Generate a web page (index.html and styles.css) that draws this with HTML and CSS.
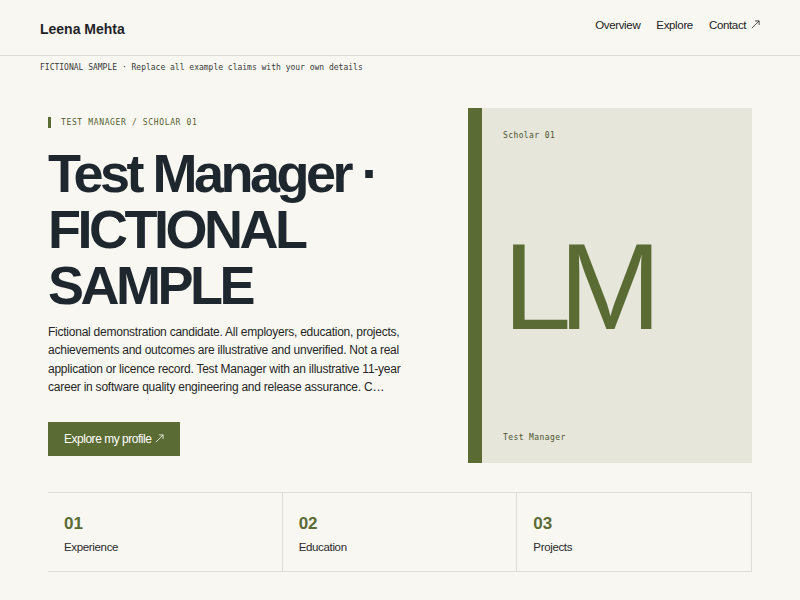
FILE: index.html
```html
<!DOCTYPE html>
<html lang="en">
<head>
<meta charset="utf-8">
<title>Leena Mehta</title>
<link rel="stylesheet" href="styles.css">
</head>
<body>
<header class="site-header">
  <div class="brand">Leena Mehta</div>
  <nav class="nav">
    <a href="#overview">Overview</a>
    <a href="#explore">Explore</a>
    <a href="#contact">Contact <svg class="arrow" viewBox="0 0 10 10" aria-hidden="true"><path d="M1 9L9 1M4.5 1H9V5.5"/></svg></a>
  </nav>
</header>
<div class="notice">FICTIONAL SAMPLE · Replace all example claims with your own details</div>
<main class="page">
  <section class="hero">
    <div class="hero-text">
      <div class="eyebrow">TEST MANAGER / SCHOLAR 01</div>
      <h1 class="title">Test Manager · FICTIONAL SAMPLE</h1>
      <p class="lead">Fictional demonstration candidate. All employers, education, projects, achievements and outcomes are illustrative and unverified. Not a real application or licence record. Test Manager with an illustrative 11-year career in software quality engineering and release assurance. C…</p>
      <a class="btn" href="#explore">Explore my profile <svg class="arrow" viewBox="0 0 10 10" aria-hidden="true"><path d="M1 9L9 1M4.5 1H9V5.5"/></svg></a>
    </div>
    <aside class="card">
      <div class="card-label">Scholar 01</div>
      <div class="monogram">LM</div>
      <div class="card-label">Test Manager</div>
    </aside>
  </section>
  <section class="stats">
    <div class="stat"><div class="stat-num">01</div><div class="stat-label">Experience</div></div>
    <div class="stat"><div class="stat-num">02</div><div class="stat-label">Education</div></div>
    <div class="stat"><div class="stat-num">03</div><div class="stat-label">Projects</div></div>
  </section>
</main>
</body>
</html>
```

FILE: styles.css
```css
* { box-sizing: border-box; }
html, body { margin: 0; padding: 0; }
body {
  background: #f8f7f2;
  color: #1f252b;
  font-family: "Liberation Sans", Arial, sans-serif;
}
a { color: inherit; text-decoration: none; }

.arrow {
  width: 9px;
  height: 9px;
  margin-left: 2px;
  fill: none;
  stroke: currentColor;
  stroke-width: 0.9;
  vertical-align: 0;
}

.site-header {
  height: 56px;
  padding: 0 40px;
  display: flex;
  align-items: center;
  justify-content: space-between;
  border-bottom: 1px solid #dddcd6;
}
.brand {
  font-size: 14px;
  font-weight: 700;
  color: #1f2328;
  padding-top: 2px;
}
.nav {
  display: flex;
  gap: 16px;
  font-size: 11.5px;
  letter-spacing: -0.03em;
  color: #222;
  padding-bottom: 5px;
}

.notice {
  padding: 7px 40px 0;
  font-family: "DejaVu Sans Mono", "Liberation Mono", monospace;
  font-size: 8px;
  line-height: 10px;
  color: #3a3a3a;
}

.page {
  width: 704px;
  margin: 35px auto 0;
}

.hero {
  display: grid;
  grid-template-columns: 1fr 284px;
  gap: 28px;
  align-items: center;
}
.eyebrow {
  font-family: "DejaVu Sans Mono", "Liberation Mono", monospace;
  font-size: 8px;
  line-height: 11px;
  letter-spacing: 0.08em;
  color: #56612f;
  border-left: 3px solid #5b6b34;
  padding-left: 10px;
  margin-bottom: 17px;
  margin-top: 1px;
}
.title {
  margin: 0 0 10px;
  font-size: 54px;
  line-height: 56px;
  font-weight: 700;
  letter-spacing: -0.065em;
  color: #1e262e;
}
.lead {
  margin: 0 0 25px;
  max-width: 370px;
  font-size: 12px;
  line-height: 18.5px;
  letter-spacing: -0.02em;
  color: #262626;
}
.btn {
  display: inline-flex;
  align-items: center;
  height: 34px;
  padding: 0 16px;
  background: #5b6b34;
  color: #fff;
  font-size: 12px;
  letter-spacing: -0.04em;
}
.btn .arrow { margin-left: 4px; }

.card {
  height: 355px;
  background: #e6e6db;
  border-left: 14px solid #5b6b34;
  padding: 22px 20px 19px 21px;
  display: flex;
  flex-direction: column;
  justify-content: space-between;
}
.card-label {
  font-family: "DejaVu Sans Mono", "Liberation Mono", monospace;
  font-size: 8px;
  line-height: 12px;
  letter-spacing: 0.05em;
  color: #4b5230;
}
.monogram {
  font-size: 123px;
  line-height: 124px;
  letter-spacing: -0.1em;
  color: #5b6b34;
}

.stats {
  margin-top: 29px;
  display: grid;
  grid-template-columns: repeat(3, 1fr);
  border-top: 1px solid #dddcd6;
  border-bottom: 1px solid #dddcd6;
}
.stat {
  border-right: 1px solid #dddcd6;
  padding: 21px 16px 0;
  height: 78px;
}
.stat-num {
  font-size: 17px;
  line-height: 20px;
  font-weight: 700;
  color: #5b6b34;
}
.stat-label {
  margin-top: 6px;
  font-size: 11.5px;
  line-height: 14px;
  letter-spacing: -0.03em;
  color: #2a2a2a;
}
```
